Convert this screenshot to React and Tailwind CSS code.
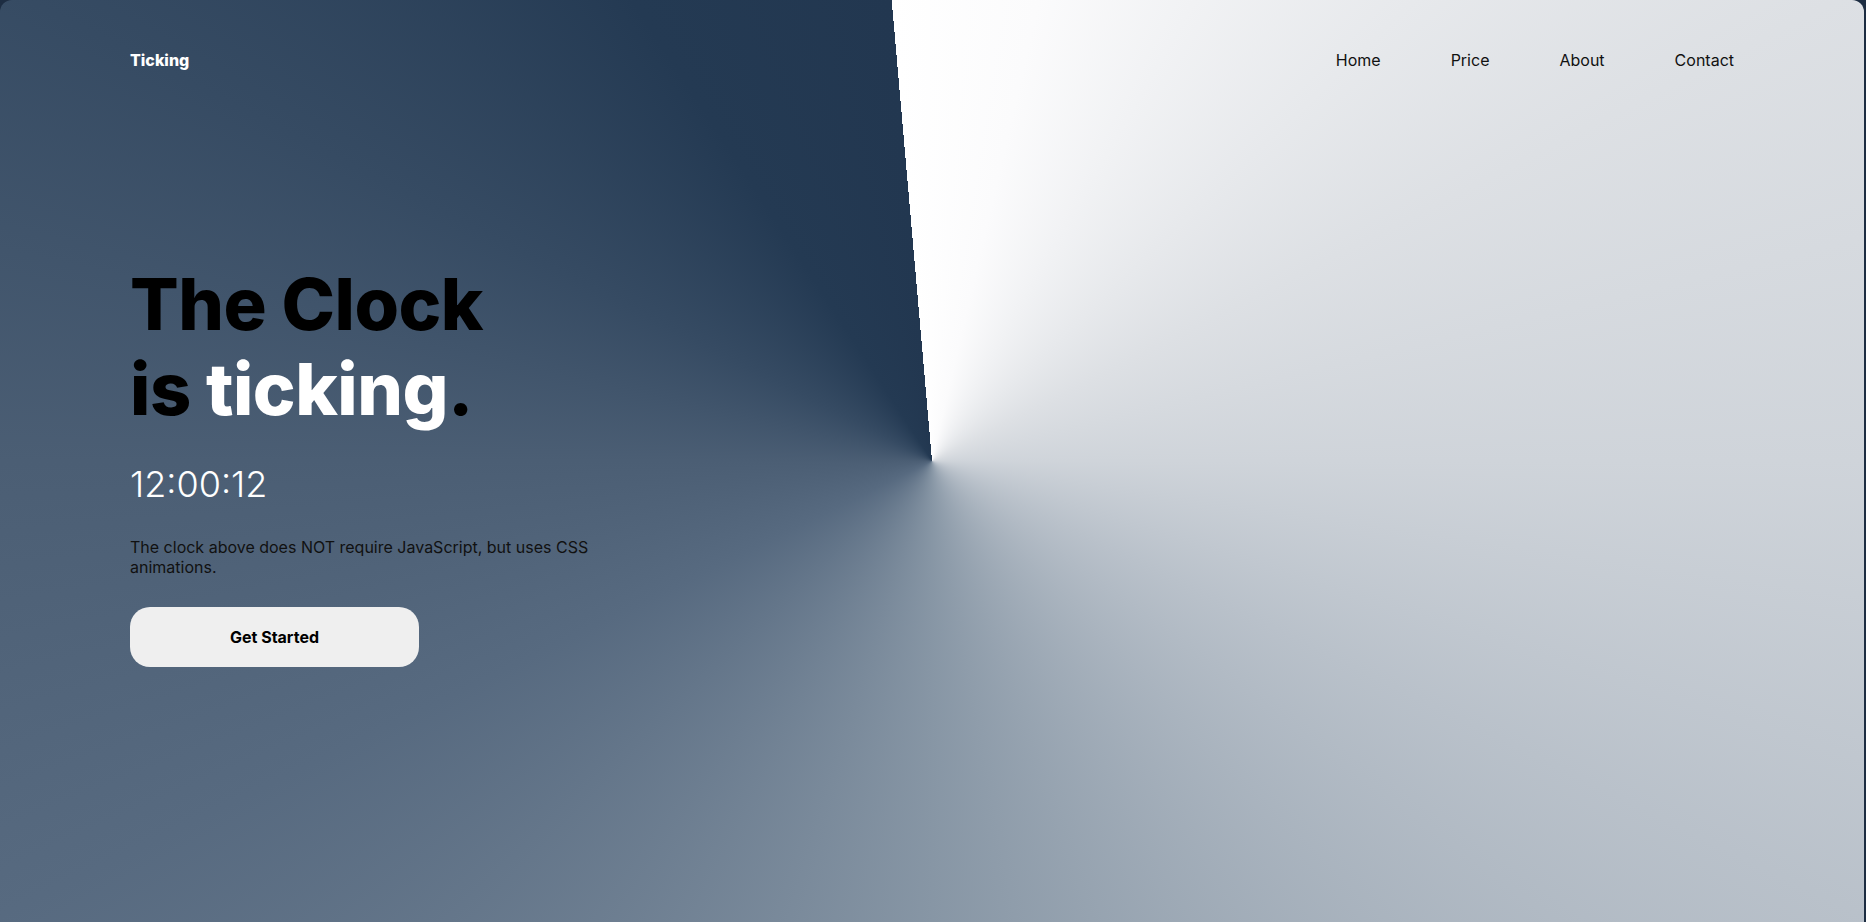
export default function App() {
  const links = ["Home", "Price", "About", "Contact"];

  return (
    <div className="w-full h-[922px] bg-[#1d2d42] pr-[2px] font-['Inter','Liberation_Sans',sans-serif]">
      <div className="h-full rounded-t-[12px] flex flex-col bg-[conic-gradient(from_355deg_at_50%_50%,#ffffff_0deg,#fbfbfc_18deg,#dde0e4_68deg,#cfd4da_95deg,#b9c1ca_121deg,#8796a5_185deg,#576a80_249deg,#4b5e74_275deg,#364b63_302deg,#243a53_332deg,#223750_360deg)]">
        <header className="h-[120px] px-[130px] flex items-center justify-between">
          <a href="#" className="text-white font-extrabold text-[16px]">
            Ticking
          </a>
          <nav className="flex items-center gap-[70px] text-[16px] text-[#111]">
            {links.map((l) => (
              <a key={l} href="#">
                {l}
              </a>
            ))}
          </nav>
        </header>

        <main className="flex-1 flex items-center px-[130px] pt-[6px] pb-[120px]">
          <div className="flex flex-col items-start gap-[30px]">
            <h1 className="text-[72px] leading-[85px] font-extrabold tracking-[-0.5px] text-black">
              The Clock
              <br />
              is <span className="text-white">ticking</span>.
            </h1>
            <div className="text-[36px] leading-[46px] font-light text-white">12:00:12</div>
            <p className="w-[480px] text-[16px] leading-[20px] text-[#111]">
              The clock above does NOT require JavaScript, but uses CSS animations.
            </p>
            <button className="w-[289px] h-[60px] rounded-[20px] bg-[#efefef] text-black font-bold text-[16px]">
              Get Started
            </button>
          </div>
        </main>
      </div>
    </div>
  );
}
